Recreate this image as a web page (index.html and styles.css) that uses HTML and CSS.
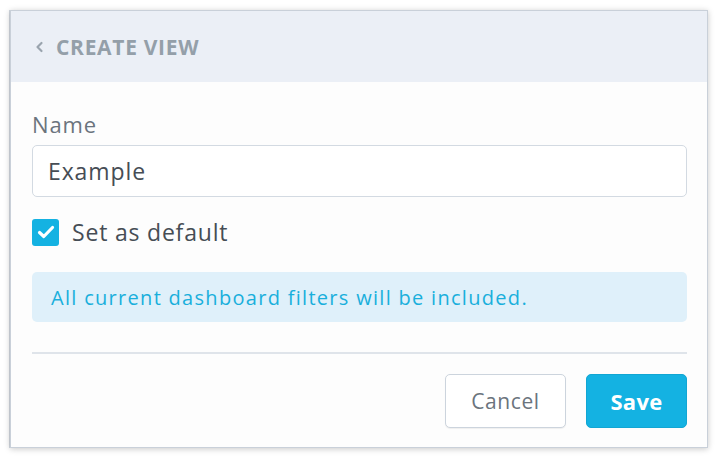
FILE: index.html
```html
<!DOCTYPE html>
<html>
<head>
<meta charset="utf-8">
<link rel="stylesheet" href="styles.css">
</head>
<body>
<div class="panel">
  <div class="header">
    <svg class="back" width="9" height="12" viewBox="0 0 9 12"><path d="M6.5 2 L2.5 6 L6.5 10" fill="none" stroke="#9aa4ae" stroke-width="2.2" stroke-linecap="round" stroke-linejoin="round"/></svg>
    <span class="title">CREATE VIEW</span>
  </div>
  <div class="body">
    <div class="label">Name</div>
    <div class="input">Example</div>
    <div class="check-row">
      <span class="checkbox"><svg width="18" height="14" viewBox="0 0 18 14"><path d="M2.5 7.5 L6.8 11.5 L15.5 2.5" fill="none" stroke="#fff" stroke-width="3.2" stroke-linecap="round" stroke-linejoin="round"/></svg></span>
      <span class="check-label">Set as default</span>
    </div>
    <div class="info">All current dashboard filters will be included.</div>
    <div class="divider"></div>
    <div class="actions">
      <button class="btn cancel">Cancel</button>
      <button class="btn save">Save</button>
    </div>
  </div>
</div>
</body>
</html>
```
FILE: styles.css
```css
html, body { margin: 0; padding: 0; background: #fff; }
body { padding: 10px; font-family: "Open Sans", Lato, sans-serif; }
.panel {
  width: 698px;
  height: 438px;
  box-sizing: border-box;
  border: 1px solid #c9d0d9;
  box-shadow: 0 1px 6px rgba(0,0,0,0.22), -1px 0 0 #d3d9e1;
  background: #fdfdfd;
  display: flex;
  flex-direction: column;
}
.header {
  height: 71px;
  background: #ebeff6;
  display: flex;
  align-items: center;
  padding-left: 24px;
  gap: 12px;
  flex-shrink: 0;
}
.back { display: block; }
.title {
  font-size: 21px;
  font-weight: 700;
  color: #949fa9;
  letter-spacing: 0.7px;
}
.body {
  padding: 30px 20px 0 21px;
  display: flex;
  flex-direction: column;
}
.label {
  font-size: 22px;
  line-height: 24px;
  color: #6b747d;
  letter-spacing: 0.9px;
}
.input {
  margin-top: 9px;
  height: 52px;
  box-sizing: border-box;
  border: 1.5px solid #d3dae2;
  border-radius: 5px;
  background: #fff;
  font-size: 23px;
  color: #464d55;
  padding-left: 15px;
  letter-spacing: 0.9px;
  display: flex;
  align-items: center;
}
.check-row {
  margin-top: 21px;
  display: flex;
  align-items: center;
  gap: 13px;
}
.checkbox {
  width: 27px;
  height: 27px;
  border-radius: 3px;
  background: #14b2e2;
  display: flex;
  align-items: center;
  justify-content: center;
}
.check-label {
  font-size: 23px;
  line-height: 28px;
  color: #464d55;
  letter-spacing: 0.8px;
}
.info {
  margin-top: 26px;
  height: 50px;
  border-radius: 5px;
  background: #dff0fa;
  color: #19afdc;
  font-size: 20px;
  letter-spacing: 1.3px;
  padding-left: 19px;
  display: flex;
  align-items: center;
}
.divider {
  margin-top: 30px;
  height: 2px;
  background: #dfe4ea;
}
.actions {
  margin-top: 20px;
  display: flex;
  justify-content: flex-end;
  gap: 20px;
}
.btn {
  height: 54px;
  border-radius: 5px;
  font-family: "Open Sans", Lato, sans-serif;
  font-size: 21px;
  padding: 0;
  cursor: pointer;
}
.cancel {
  width: 121px;
  background: #fff;
  border: 1.5px solid #ccd4dd;
  color: #6b747d;
  letter-spacing: 0.6px;
  box-shadow: 0 1px 1px rgba(0,0,0,0.06);
}
.save {
  width: 101px;
  background: #14b2e2;
  border: 1px solid #12a6d3;
  color: #fff;
  font-weight: 700;
  font-size: 22px;
  letter-spacing: 0.3px;
}
```
